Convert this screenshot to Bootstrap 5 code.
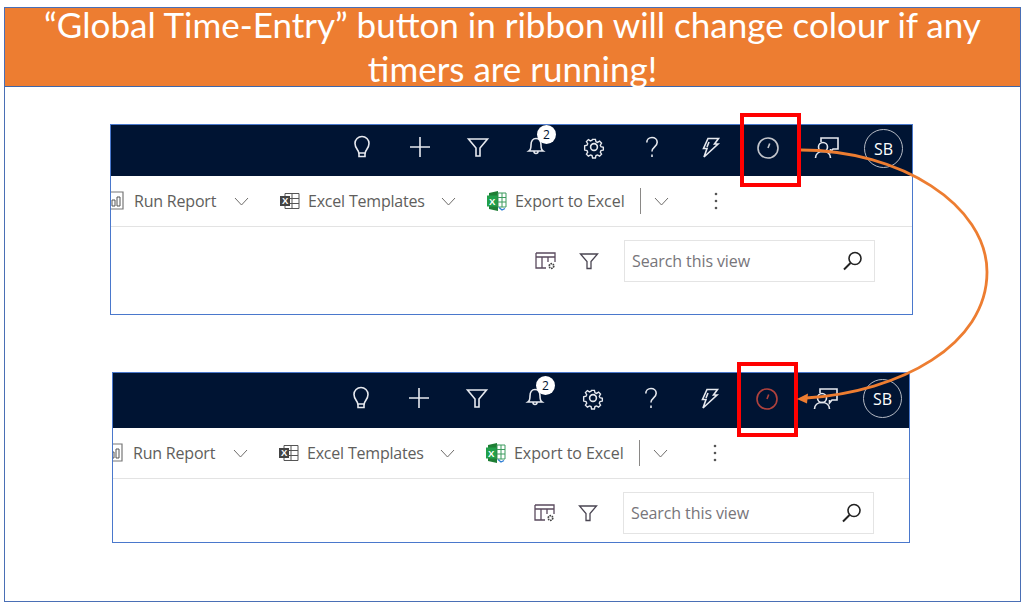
<!doctype html>
<html lang="en"><head><meta charset="utf-8"><title>Global Time-Entry</title>
<link href="https://cdn.jsdelivr.net/npm/bootstrap@5.3.0/dist/css/bootstrap.min.css" rel="stylesheet">
<script src="https://cdn.jsdelivr.net/npm/bootstrap@5.3.0/dist/js/bootstrap.bundle.min.js"></script>
<style>
html,body{height:605px;overflow:hidden;background:#fff}
.slide-frame{margin:7px 3px 0 4px;height:595px;border:1px solid #4a6fb5;position:relative}
.slide-head{height:79px;background:#ed7d31;border-bottom:1px solid #3f66a8;color:#fff;font:400 35px/44px Lato,"Open Sans",sans-serif;text-align:center;padding:0 30px;display:flow-root}
.slide-title{margin-top:-6px}
.shot{border:1px solid #4a78cc;background:#fff;overflow:hidden;font-family:"Open Sans","Noto Sans",sans-serif}
.shot-a{width:803px;height:191px;margin:37px 0 0 105px}
.shot-b{width:798px;height:171px;margin:57px 0 0 107px}
.topbar{background:#001433;color:#fff}
.shot-a .topbar{height:51px;padding:0 9px 8px 0}.shot-b .topbar{height:55px;padding:0 7px 6px 0}
.tcell{width:58px;height:100%;flex:none}
.tcell svg{width:26px;height:26px;fill:none;stroke:#e6e9ef;stroke-width:1.6}
.tcell svg.clock-idle{stroke:#c3c6cc}
.tcell svg.clock-run{stroke:#b0423d}
.tcell-me{width:39px;margin-left:9px;padding-top:4px}
.shot-b .tcell-me{padding-top:2px}
.avatar{width:39px;height:39px;border:1.5px solid #b5bac4;border-radius:50%;font-size:16px;flex:none}
.bell-wrap{width:26px;height:26px}
.bell-count{position:absolute;left:14px;top:-9px;width:19px;height:19px;border-radius:50%;background:#fff;color:#001433;font-size:12px;line-height:19px;text-align:center}
.cmdbar{height:51px;border-bottom:1px solid #e3e3e3;color:#605e5c;font-size:16px;letter-spacing:-.2px}
.shot-b .cmdbar{margin-left:-3px}
.cmdbar svg{flex:none}
.chev{width:15px;height:9px;fill:none;stroke:#6e6c6a;stroke-width:1}
.cmd-run{margin-left:10px;width:84px;white-space:nowrap}
.cmd-xlt{margin-left:8px;width:117px;white-space:nowrap}
.cmd-xle{margin-left:8px;width:110px;white-space:nowrap;letter-spacing:-.06px}
.cmd-sep{margin-left:15px;width:1px;height:26px;background:#8a8886}
.chev-gap16{margin-left:16px}.chev-gap13{margin-left:13px}
.ic-gap31{margin-left:31px}.dots-gap{margin-left:45px}
.viewbar{padding-top:13px}
.shot-a .viewbar{padding-right:37px}.shot-b .viewbar{padding-right:35px}
.view-ic{margin-top:11px}
.view-fl{margin:11px 25px 0 22px}
.searchbox{width:251px;height:42px;border:1.5px solid #e4e4e4;color:#77757a;font-size:16px;letter-spacing:-.1px;padding:0 11px 0 7px}
.redbox{position:absolute;border:4px solid #f00;width:61px}
.red-a{left:735px;top:105px;height:74px}
.red-b{left:732px;top:354px;height:75px}
.arrow-layer{position:absolute;left:-5px;top:-8px;width:1024px;height:605px;pointer-events:none}
</style></head><body>
<svg width="0" height="0" style="position:absolute">
<defs>
<symbol id="i-bulb" viewBox="0 0 26 26"><path d="M9.800 19c0-3-3.800-4.500-3.800-9.500a7 7 0 0 1 14 0c0 5-3.800 6.500-3.800 9.500zM10 19v3.500h6V19"/></symbol>
<symbol id="i-plus" viewBox="0 0 26 26"><path d="M3 13h20M13 3v20"/></symbol>
<symbol id="i-funnel" viewBox="0 0 26 26"><path d="M3.500 5h19l-7.500 9v8h-4v-8z"/></symbol>
<symbol id="i-bell" viewBox="0 0 26 26"><path d="M6 17c1.500-1 2-2.500 2-6 0-4 2-6.500 5-6.500s5 2.500 5 6.500c0 3.500.5 5 2 6zM11 17.500c0 1.500.7 2 2 2s2-.5 2-2"/></symbol>
<symbol id="i-gear" viewBox="0 0 26 26"><circle cx="13" cy="13" r="3.400"/><path d="M11.300 4h3.400l.6 2.800 1.800.8 2.500-1.500 2.300 2.400-1.500 2.400.8 1.800 2.800.6v3.300l-2.800.6-.8 1.800 1.500 2.400-2.300 2.400-2.500-1.500-1.800.8-.6 2.800h-3.400l-.6-2.800-1.800-.8-2.500 1.500-2.300-2.400 1.500-2.400-.8-1.800-2.800-.6V11.500l2.800-.6.8-1.800-1.500-2.400 2.300-2.400 2.500 1.500 1.800-.8z" transform="translate(1.950 1.950) scale(.85)"/></symbol>
<symbol id="i-help" viewBox="0 0 26 26"><path d="M7.800 8.500c0-3.200 2.400-5 5.200-5s5.200 1.800 5.200 4.800c0 4.500-5.200 4.700-5.200 9.200"/><path d="M13 20.500v2.500"/></symbol>
<symbol id="i-bolt" viewBox="0 0 26 26"><path d="M11 4.500h10.500l-4 5.500h3.500L7 23l3-8.500H6.500zM12 8l-2 5"/></symbol>
<symbol id="i-clock" viewBox="0 0 26 26"><circle cx="13" cy="14" r="10"/><path d="M13 14l1.700-4.500"/></symbol>
<symbol id="i-chat" viewBox="0 0 26 26"><path d="M8 8V4h17v11h-5l-2.500 3v-3"/><circle cx="10" cy="13" r="4.500"/><path d="M2.500 24c0-4 3-6.500 7.500-6.500s7.500 2.500 7.500 6.500"/></symbol>
<symbol id="i-run" viewBox="0 0 13 22"><path d="M-6 2h18v17H-6z" fill="none" stroke="#777" stroke-width="1.200"/><path d="M1 10h3v6H1zM6 7h3v9H6z" fill="none" stroke="#555" stroke-width="1"/></symbol>
<symbol id="i-xlt" viewBox="0 0 20 20"><path d="M5 2.500h14v15H5z" fill="#fff" stroke="#555"/><path d="M12 2.500v15M5 7.500h14M5 12.500h14" stroke="#555"/><path d="M0 5h10v10H0z" fill="#444"/><text x="5" y="13.200" font-size="9.500" font-weight="700" text-anchor="middle" fill="#fff" font-family="Liberation Sans">X</text></symbol>
<symbol id="i-xle" viewBox="0 0 20 22"><path d="M2 3l9-2v20l-9-2z" fill="#1e7e34"/><path d="M0 5.500h10v11H0z" fill="#21a04a"/><text x="5" y="14.600" font-size="9.500" font-weight="700" text-anchor="middle" fill="#fff" font-family="Liberation Sans">X</text><path d="M11 3h8v14h-8zM15 3v14M11 7.500h8M11 12h8" fill="#fff" stroke="#3a9a5c" stroke-width="1"/><path d="M12 17.500l3 2.500 3-1.500" fill="none" stroke="#2b7cd3" stroke-width="1.300"/></symbol>
<symbol id="i-grid" viewBox="0 0 22 20"><path d="M1 2h19v9M1 2v15h10M1 6h19M7 6v11M13 6v5" fill="none" stroke="#5a4a5e" stroke-width="1.300"/><circle cx="16.500" cy="15" r="2.300" fill="none" stroke="#444" stroke-width="1.700" stroke-dasharray="1.500 .7"/></symbol>
<symbol id="i-flt" viewBox="0 0 20 20"><path d="M1.500 3h17l-6.500 7.500v7h-4v-7z" fill="none" stroke="#4a4552" stroke-width="1.300"/></symbol>
<symbol id="i-search" viewBox="0 0 20 20"><circle cx="12" cy="7.500" r="6" fill="none" stroke="#222" stroke-width="1.600"/><path d="M7.500 12l-6.500 6.500" stroke="#222" stroke-width="2"/></symbol>
</defs></svg>

<div class="slide-frame">
<div class="slide-head"><div class="slide-title">“Global Time-Entry” button in ribbon will change colour if any timers are running!</div></div>

<div class="shot shot-a">
 <div class="topbar d-flex align-items-center justify-content-end">
  <div class="tcell d-flex align-items-center justify-content-center"><svg><use href="#i-bulb"/></svg></div>
  <div class="tcell d-flex align-items-center justify-content-center"><svg><use href="#i-plus"/></svg></div>
  <div class="tcell d-flex align-items-center justify-content-center"><svg><use href="#i-funnel"/></svg></div>
  <div class="tcell d-flex align-items-center justify-content-center"><div class="bell-wrap position-relative"><svg><use href="#i-bell"/></svg><span class="bell-count">2</span></div></div>
  <div class="tcell d-flex align-items-center justify-content-center"><svg><use href="#i-gear"/></svg></div>
  <div class="tcell d-flex align-items-center justify-content-center"><svg><use href="#i-help"/></svg></div>
  <div class="tcell d-flex align-items-center justify-content-center"><svg><use href="#i-bolt"/></svg></div>
  <div class="tcell d-flex align-items-center justify-content-center"><svg class="clock-idle"><use href="#i-clock"/></svg></div>
  <div class="tcell d-flex align-items-center justify-content-center"><svg><use href="#i-chat"/></svg></div>
  <div class="tcell-me d-flex align-items-center"><div class="avatar d-flex align-items-center justify-content-center">SB</div></div>
 </div>
 <div class="cmdbar d-flex align-items-center">
  <svg width="13" height="22"><use href="#i-run"/></svg>
  <span class="cmd-run">Run Report</span>
  <svg class="chev ms-3" viewBox="0 0 15 9"><path d="M1 1l6.500 7L14 1"/></svg>
  <svg class="ic-gap31" width="20" height="20"><use href="#i-xlt"/></svg>
  <span class="cmd-xlt">Excel Templates</span>
  <svg class="chev chev-gap16" viewBox="0 0 15 9"><path d="M1 1l6.500 7L14 1"/></svg>
  <svg class="ic-gap31" width="20" height="22"><use href="#i-xle"/></svg>
  <span class="cmd-xle">Export to Excel</span>
  <span class="cmd-sep"></span>
  <svg class="chev chev-gap13" viewBox="0 0 15 9"><path d="M1 1l6.500 7L14 1"/></svg>
  <svg class="dots-gap" width="4" height="18"><circle cx="2" cy="2" r="1.300" fill="#555"/><circle cx="2" cy="9" r="1.300" fill="#555"/><circle cx="2" cy="16" r="1.300" fill="#555"/></svg>
 </div>
 <div class="viewbar d-flex align-items-start justify-content-end">
  <svg class="view-ic" width="22" height="20"><use href="#i-grid"/></svg>
  <svg class="view-fl" width="20" height="20"><use href="#i-flt"/></svg>
  <div class="searchbox d-flex align-items-center justify-content-between"><span>Search this view</span><svg width="20" height="20"><use href="#i-search"/></svg></div>
 </div>
</div>

<div class="shot shot-b">
 <div class="topbar d-flex align-items-center justify-content-end">
  <div class="tcell d-flex align-items-center justify-content-center"><svg><use href="#i-bulb"/></svg></div>
  <div class="tcell d-flex align-items-center justify-content-center"><svg><use href="#i-plus"/></svg></div>
  <div class="tcell d-flex align-items-center justify-content-center"><svg><use href="#i-funnel"/></svg></div>
  <div class="tcell d-flex align-items-center justify-content-center"><div class="bell-wrap position-relative"><svg><use href="#i-bell"/></svg><span class="bell-count">2</span></div></div>
  <div class="tcell d-flex align-items-center justify-content-center"><svg><use href="#i-gear"/></svg></div>
  <div class="tcell d-flex align-items-center justify-content-center"><svg><use href="#i-help"/></svg></div>
  <div class="tcell d-flex align-items-center justify-content-center"><svg><use href="#i-bolt"/></svg></div>
  <div class="tcell d-flex align-items-center justify-content-center"><svg class="clock-run"><use href="#i-clock"/></svg></div>
  <div class="tcell d-flex align-items-center justify-content-center"><svg><use href="#i-chat"/></svg></div>
  <div class="tcell-me d-flex align-items-center"><div class="avatar d-flex align-items-center justify-content-center">SB</div></div>
 </div>
 <div class="cmdbar d-flex align-items-center">
  <svg width="13" height="22"><use href="#i-run"/></svg>
  <span class="cmd-run">Run Report</span>
  <svg class="chev ms-3" viewBox="0 0 15 9"><path d="M1 1l6.500 7L14 1"/></svg>
  <svg class="ic-gap31" width="20" height="20"><use href="#i-xlt"/></svg>
  <span class="cmd-xlt">Excel Templates</span>
  <svg class="chev chev-gap16" viewBox="0 0 15 9"><path d="M1 1l6.500 7L14 1"/></svg>
  <svg class="ic-gap31" width="20" height="22"><use href="#i-xle"/></svg>
  <span class="cmd-xle">Export to Excel</span>
  <span class="cmd-sep"></span>
  <svg class="chev chev-gap13" viewBox="0 0 15 9"><path d="M1 1l6.500 7L14 1"/></svg>
  <svg class="dots-gap" width="4" height="18"><circle cx="2" cy="2" r="1.300" fill="#555"/><circle cx="2" cy="9" r="1.300" fill="#555"/><circle cx="2" cy="16" r="1.300" fill="#555"/></svg>
 </div>
 <div class="viewbar d-flex align-items-start justify-content-end">
  <svg class="view-ic" width="22" height="20"><use href="#i-grid"/></svg>
  <svg class="view-fl" width="20" height="20"><use href="#i-flt"/></svg>
  <div class="searchbox d-flex align-items-center justify-content-between"><span>Search this view</span><svg width="20" height="20"><use href="#i-search"/></svg></div>
 </div>
</div>

<div class="redbox red-a"></div>
<div class="redbox red-b"></div>
<svg class="arrow-layer" viewBox="0 0 1024 605">
 <path d="M801 150C900 150 987 205 987 272C987 345 900 392 806 398" fill="none" stroke="#ed7d31" stroke-width="2.800"/>
 <path d="M797 399l11-5.500-1 10z" fill="#ed7d31"/>
</svg>
</div>
</body></html>
